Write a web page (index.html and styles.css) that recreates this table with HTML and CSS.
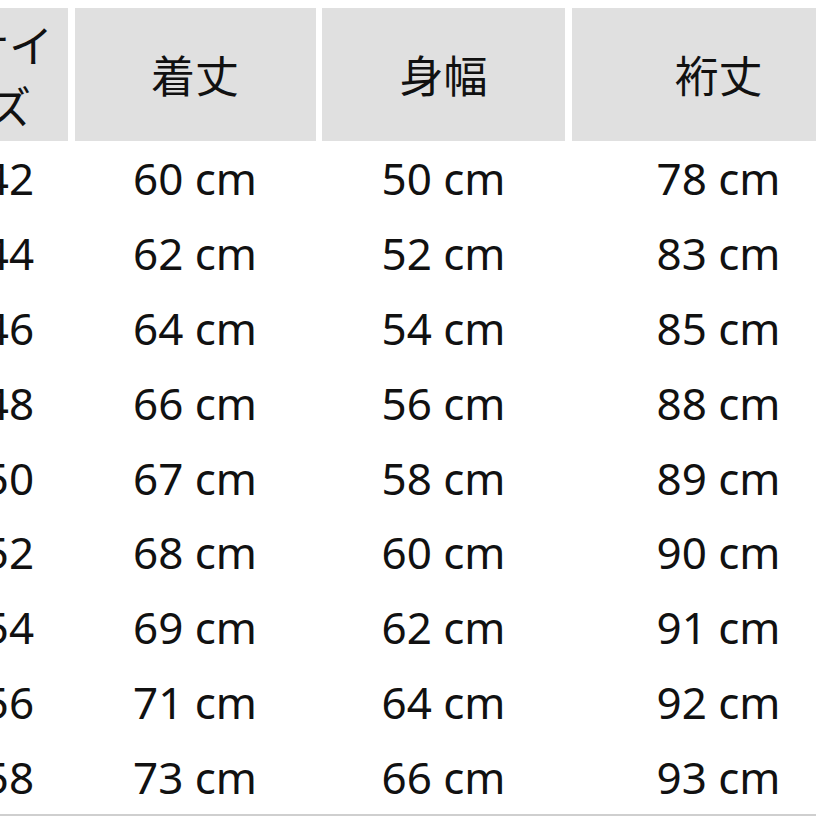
FILE: index.html
```html
<!DOCTYPE html>
<html lang="ja">
<head>
<meta charset="utf-8">
<link rel="stylesheet" href="styles.css">
</head>
<body>
<div class="viewport">
  <div class="chart">
    <div class="row head">
      <div class="cell">サイ<br>ズ</div>
      <div class="cell">着丈</div>
      <div class="cell">身幅</div>
      <div class="cell">裄丈</div>
    </div>
    <div class="row"><div class="cell">42</div><div class="cell">60 cm</div><div class="cell">50 cm</div><div class="cell">78 cm</div></div>
    <div class="row"><div class="cell">44</div><div class="cell">62 cm</div><div class="cell">52 cm</div><div class="cell">83 cm</div></div>
    <div class="row"><div class="cell">46</div><div class="cell">64 cm</div><div class="cell">54 cm</div><div class="cell">85 cm</div></div>
    <div class="row"><div class="cell">48</div><div class="cell">66 cm</div><div class="cell">56 cm</div><div class="cell">88 cm</div></div>
    <div class="row"><div class="cell">50</div><div class="cell">67 cm</div><div class="cell">58 cm</div><div class="cell">89 cm</div></div>
    <div class="row"><div class="cell">52</div><div class="cell">68 cm</div><div class="cell">60 cm</div><div class="cell">90 cm</div></div>
    <div class="row"><div class="cell">54</div><div class="cell">69 cm</div><div class="cell">62 cm</div><div class="cell">91 cm</div></div>
    <div class="row"><div class="cell">56</div><div class="cell">71 cm</div><div class="cell">64 cm</div><div class="cell">92 cm</div></div>
    <div class="row last"><div class="cell">58</div><div class="cell">73 cm</div><div class="cell">66 cm</div><div class="cell">93 cm</div></div>
  </div>
</div>
</body>
</html>
```
FILE: styles.css
```css
html, body {
  margin: 0;
  padding: 0;
  background: #ffffff;
}
.viewport {
  width: 816px;
  height: 816px;
  overflow: hidden;
}
.chart {
  margin-left: -50px;
  padding-top: 8px;
  width: 920px;
  font-family: "Noto Sans", "Noto Sans CJK JP", sans-serif;
  font-size: 44px;
  color: #111111;
}
.row {
  display: grid;
  grid-template-columns: 118px 241px 243px 294px;
  column-gap: 6.5px;
  height: 74.8px;
  align-items: center;
}
.row .cell {
  text-align: center;
  white-space: nowrap;
}
.row.head {
  height: 133px;
  align-items: stretch;
}
.row.head .cell {
  background: #e0e0e0;
  display: flex;
  align-items: center;
  justify-content: center;
  text-align: center;
  line-height: 61px;
  font-family: "Noto Sans CJK JP", sans-serif;
}
.row.last {
  border-bottom: 2px solid #cfcfcf;
}
```
